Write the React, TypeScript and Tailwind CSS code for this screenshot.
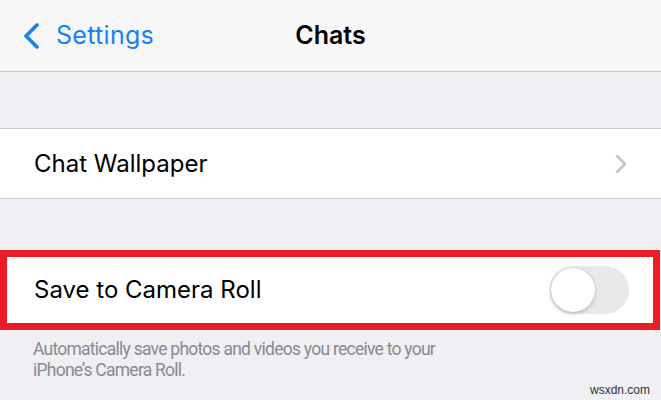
export default function App() {
  return (
    <div className="w-[661px] h-[400px] bg-[#efeff4] overflow-hidden flex flex-col font-['Inter','Liberation_Sans',sans-serif]">
      {/* nav bar */}
      <div className="h-[72px] shrink-0 bg-[#f7f7f7] border-b border-[#c8c7cc] grid grid-cols-[1fr_auto_1fr] items-center">
        <div className="flex items-center pl-[22px] gap-[16px] text-[#1a7ff5]">
          <svg width="18" height="26" viewBox="0 0 18 26" fill="none">
            <path d="M15 2 L4 13 L15 24" stroke="currentColor" strokeWidth="3.6" strokeLinecap="round" strokeLinejoin="round" />
          </svg>
          <span className="text-[25px] leading-none tracking-[0.3px]">Settings</span>
        </div>
        <div className="text-[25px] font-semibold leading-none text-black">Chats</div>
        <div />
      </div>

      <div className="h-[56px] shrink-0" />

      {/* Chat Wallpaper */}
      <div className="h-[71px] shrink-0 bg-white border-y border-[#c8c7cc] flex items-center justify-between pl-[34px] pr-[34px]">
        <span className="text-[24px] text-black">Chat Wallpaper</span>
        <svg width="12" height="20" viewBox="0 0 12 20" fill="none">
          <path d="M2 2 L10 10 L2 18" stroke="#c4c4c7" strokeWidth="2.6" strokeLinecap="round" strokeLinejoin="round" />
        </svg>
      </div>

      <div className="h-[51px] shrink-0" />

      {/* highlighted row */}
      <div className="h-[80px] w-[660px] shrink-0 border-[7px] border-[#ec1c24] bg-white flex items-center justify-between pl-[27px] pr-[24px]">
        <span className="text-[24px] text-black">Save to Camera Roll</span>
        <div className="w-[80px] h-[48px] rounded-full bg-[#e9e9eb] flex items-center pl-[2px]">
          <div className="w-[44px] h-[44px] rounded-full bg-white shadow-[0_2px_4px_rgba(0,0,0,0.18),0_0_1px_rgba(0,0,0,0.2)]" />
        </div>
      </div>

      <p className="ml-[33px] mt-[9px] w-[425px] font-['Roboto',sans-serif] text-[17.5px] tracking-[-0.75px] leading-[21px] text-[#8a8a8e]">
        Automatically save photos and videos you receive to your iPhone’s Camera Roll.
      </p>

      <div className="flex justify-end pr-[11px] mt-auto pb-[4px]">
        <span className="text-[12px] leading-none text-[#333] font-['Liberation_Sans',sans-serif]">wsxdn.com</span>
      </div>
    </div>
  );
}
